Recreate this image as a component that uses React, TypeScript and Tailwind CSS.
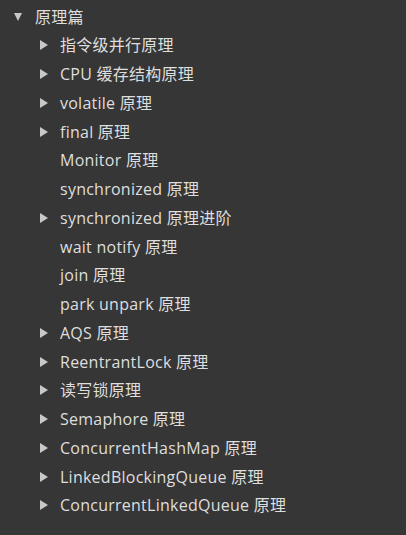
const items: { label: string; arrow: boolean }[] = [
  { label: "指令级并行原理", arrow: true },
  { label: "CPU 缓存结构原理", arrow: true },
  { label: "volatile 原理", arrow: true },
  { label: "final 原理", arrow: true },
  { label: "Monitor 原理", arrow: false },
  { label: "synchronized 原理", arrow: false },
  { label: "synchronized 原理进阶", arrow: true },
  { label: "wait notify 原理", arrow: false },
  { label: "join 原理", arrow: false },
  { label: "park unpark 原理", arrow: false },
  { label: "AQS 原理", arrow: true },
  { label: "ReentrantLock 原理", arrow: true },
  { label: "读写锁原理", arrow: true },
  { label: "Semaphore 原理", arrow: true },
  { label: "ConcurrentHashMap 原理", arrow: true },
  { label: "LinkedBlockingQueue 原理", arrow: true },
  { label: "ConcurrentLinkedQueue 原理", arrow: true },
];

export default function App() {
  return (
    <div
      className="h-[535px] w-[406px] overflow-hidden bg-[#363636] pt-[2px] text-[16px] tracking-[0.25px] text-[#dedede]"
      style={{ fontFamily: '"Open Sans", "Noto Sans CJK SC", sans-serif' }}
    >
      {/* root */}
      <div className="flex h-[29px] items-center">
        <span className="ml-[14px] h-0 w-0 border-x-[4.5px] border-t-[8px] border-x-transparent border-t-[#c8c8c8]" />
        <span className="ml-[13px]">原理篇</span>
      </div>

      {/* children */}
      <div>
        {items.map((item) => (
          <div key={item.label} className="flex h-[28.75px] items-center">
            <span className="flex w-[60px] justify-start pl-[40px]">
              {item.arrow && (
                <span className="h-0 w-0 border-y-[5px] border-l-[8px] border-y-transparent border-l-[#c8c8c8]" />
              )}
            </span>
            <span className="whitespace-nowrap">{item.label}</span>
          </div>
        ))}
      </div>
    </div>
  );
}
